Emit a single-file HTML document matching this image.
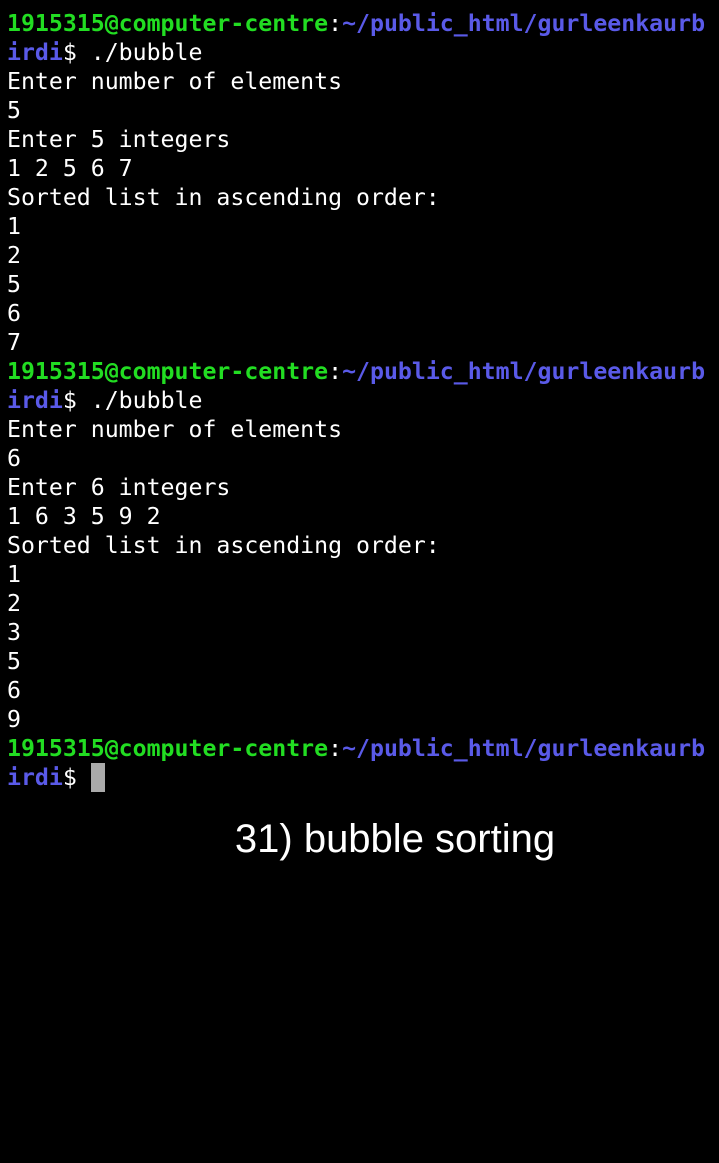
<!DOCTYPE html>
<html><head><meta charset="utf-8"><style>
html,body{margin:0;padding:0;background:#000;width:719px;height:1163px;overflow:hidden}
pre{margin:0;position:absolute;left:7px;top:9px;font-family:"DejaVu Sans Mono","Liberation Mono",monospace;font-size:23.2px;line-height:29px;color:#fff;white-space:pre}
.g{color:#22dd22;font-weight:bold}.b{color:#5a5ae8;font-weight:bold}
.c{display:inline-block;width:14px;height:29px;background:#aaa;vertical-align:top}
.cap{position:absolute;left:195px;top:817px;width:400px;font-family:"Liberation Sans",sans-serif;font-size:40px;color:#fff;white-space:nowrap;text-align:center}
</style></head><body>
<pre><span class="g">1915315@computer-centre</span>:<span class="b">~/public_html/gurleenkaurb
irdi</span>$ ./bubble
Enter number of elements
5
Enter 5 integers
1 2 5 6 7
Sorted list in ascending order:
1
2
5
6
7
<span class="g">1915315@computer-centre</span>:<span class="b">~/public_html/gurleenkaurb
irdi</span>$ ./bubble
Enter number of elements
6
Enter 6 integers
1 6 3 5 9 2
Sorted list in ascending order:
1
2
3
5
6
9
<span class="g">1915315@computer-centre</span>:<span class="b">~/public_html/gurleenkaurb
irdi</span>$ <span class="c"></span></pre>
<div class="cap">31) bubble sorting</div>
</body></html>
